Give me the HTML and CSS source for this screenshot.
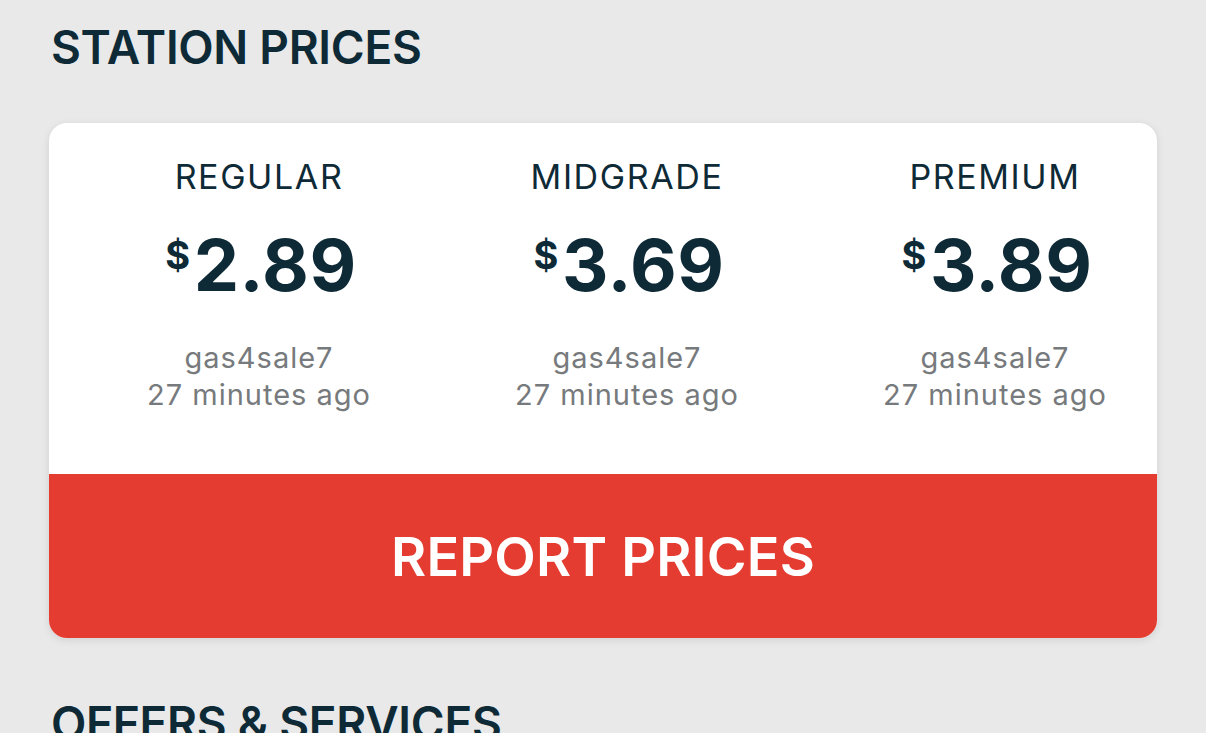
FILE: index.html
```html
<!DOCTYPE html>
<html>
<head>
<meta charset="utf-8">
<link rel="stylesheet" href="styles.css">
</head>
<body>
<div class="page">
  <h2 class="section-title">STATION PRICES</h2>
  <div class="card">
    <div class="prices">
      <div class="col">
        <div class="grade">REGULAR</div>
        <div class="price"><span class="cur">$</span>2.89</div>
        <div class="meta">gas4sale7<br>27 minutes ago</div>
      </div>
      <div class="col">
        <div class="grade">MIDGRADE</div>
        <div class="price"><span class="cur">$</span>3.69</div>
        <div class="meta">gas4sale7<br>27 minutes ago</div>
      </div>
      <div class="col">
        <div class="grade">PREMIUM</div>
        <div class="price"><span class="cur">$</span>3.89</div>
        <div class="meta">gas4sale7<br>27 minutes ago</div>
      </div>
    </div>
    <div class="report">REPORT PRICES</div>
  </div>
  <h2 class="section-title second">OFFERS &amp; SERVICES</h2>
</div>
</body>
</html>
```
FILE: styles.css
```css
html, body {
  margin: 0;
  padding: 0;
  background: #e9e9e9;
  font-family: Inter, "Open Sans", sans-serif;
  color: #0e2a36;
}
.page {
  width: 1206px;
  height: 733px;
  overflow: hidden;
  padding: 0 49px;
  box-sizing: border-box;
}
.section-title {
  margin: 0;
  padding: 20px 0 0 2px;
  font-size: 46px;
  line-height: 54px;
  font-weight: 600;
  letter-spacing: -0.3px;
}
.section-title.second {
  padding-top: 58px;
}
.card {
  margin-top: 49px;
  background: #fff;
  border-radius: 18px;
  overflow: hidden;
  box-shadow: 0 2px 8px rgba(0,0,0,0.10);
}
.prices {
  display: grid;
  grid-template-columns: repeat(3, 300px);
  column-gap: 68px;
  padding: 30px 0 61px 60px;
}
.col {
  display: flex;
  flex-direction: column;
  align-items: center;
  text-align: center;
}
.grade {
  font-size: 34px;
  line-height: 48px;
  font-weight: 400;
  letter-spacing: 1.6px;
}
.price {
  margin-top: 24px;
  font-size: 72px;
  line-height: 80px;
  font-weight: 700;
  letter-spacing: 0.5px;
  padding-left: 4px;
}
.cur {
  font-size: 38px;
  vertical-align: top;
  line-height: 60px;
  margin-right: 3px;
}
.meta {
  margin-top: 34px;
  font-size: 29px;
  line-height: 37px;
  color: #777a7c;
  letter-spacing: 1px;
}
.report {
  background: #e53c31;
  color: #fff;
  height: 164px;
  display: flex;
  align-items: center;
  justify-content: center;
  font-size: 54px;
  font-weight: 600;
  letter-spacing: 0.2px;
}
```
